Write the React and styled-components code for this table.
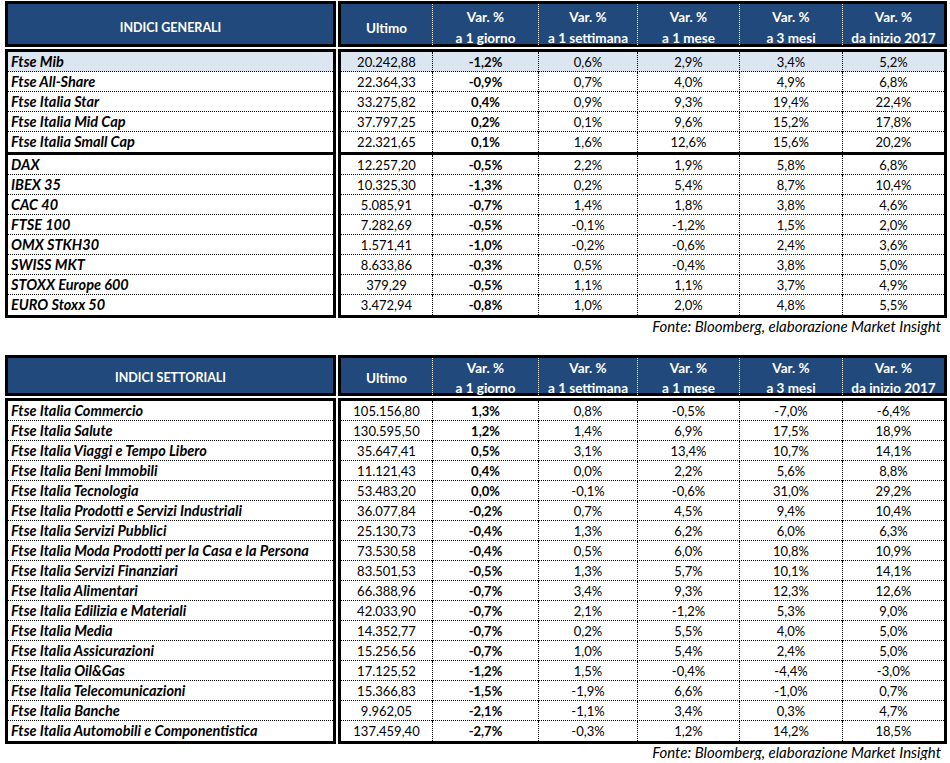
import React from "react";
import styled, { createGlobalStyle } from "styled-components";

const GlobalStyle = createGlobalStyle`
  * { box-sizing: border-box; }
  body {
    margin: 0;
    background: #ffffff;
    font-family: Lato, "Liberation Sans", sans-serif;
    color: #000000;
  }
`;

const COLS = "91px 106px 99px 102px 103px 102px";
const BLUE = "#22497c";

const HEADS = [
  ["Ultimo"],
  ["Var. %", "a 1 giorno"],
  ["Var. %", "a 1 settimana"],
  ["Var. %", "a 1 mese"],
  ["Var. %", "a 3 mesi"],
  ["Var. %", "da inizio 2017"],
];

const generali = [
  [
    ["Ftse Mib", "20.242,88", "-1,2%", "0,6%", "2,9%", "3,4%", "5,2%", true],
    ["Ftse All-Share", "22.364,33", "-0,9%", "0,7%", "4,0%", "4,9%", "6,8%"],
    ["Ftse Italia Star", "33.275,82", "0,4%", "0,9%", "9,3%", "19,4%", "22,4%"],
    ["Ftse Italia Mid Cap", "37.797,25", "0,2%", "0,1%", "9,6%", "15,2%", "17,8%"],
    ["Ftse Italia Small Cap", "22.321,65", "0,1%", "1,6%", "12,6%", "15,6%", "20,2%"],
  ],
  [
    ["DAX", "12.257,20", "-0,5%", "2,2%", "1,9%", "5,8%", "6,8%"],
    ["IBEX 35", "10.325,30", "-1,3%", "0,2%", "5,4%", "8,7%", "10,4%"],
    ["CAC 40", "5.085,91", "-0,7%", "1,4%", "1,8%", "3,8%", "4,6%"],
    ["FTSE 100", "7.282,69", "-0,5%", "-0,1%", "-1,2%", "1,5%", "2,0%"],
    ["OMX STKH30", "1.571,41", "-1,0%", "-0,2%", "-0,6%", "2,4%", "3,6%"],
    ["SWISS MKT", "8.633,86", "-0,3%", "0,5%", "-0,4%", "3,8%", "5,0%"],
    ["STOXX Europe 600", "379,29", "-0,5%", "1,1%", "1,1%", "3,7%", "4,9%"],
    ["EURO Stoxx 50", "3.472,94", "-0,8%", "1,0%", "2,0%", "4,8%", "5,5%"],
  ],
];

const settoriali = [
  [
    ["Ftse Italia Commercio", "105.156,80", "1,3%", "0,8%", "-0,5%", "-7,0%", "-6,4%"],
    ["Ftse Italia Salute", "130.595,50", "1,2%", "1,4%", "6,9%", "17,5%", "18,9%"],
    ["Ftse Italia Viaggi e Tempo Libero", "35.647,41", "0,5%", "3,1%", "13,4%", "10,7%", "14,1%"],
    ["Ftse Italia Beni Immobili", "11.121,43", "0,4%", "0,0%", "2,2%", "5,6%", "8,8%"],
    ["Ftse Italia Tecnologia", "53.483,20", "0,0%", "-0,1%", "-0,6%", "31,0%", "29,2%"],
    ["Ftse Italia Prodotti e Servizi Industriali", "36.077,84", "-0,2%", "0,7%", "4,5%", "9,4%", "10,4%"],
    ["Ftse Italia Servizi Pubblici", "25.130,73", "-0,4%", "1,3%", "6,2%", "6,0%", "6,3%"],
    ["Ftse Italia Moda Prodotti per la Casa e la Persona", "73.530,58", "-0,4%", "0,5%", "6,0%", "10,8%", "10,9%"],
    ["Ftse Italia Servizi Finanziari", "83.501,53", "-0,5%", "1,3%", "5,7%", "10,1%", "14,1%"],
    ["Ftse Italia Alimentari", "66.388,96", "-0,7%", "3,4%", "9,3%", "12,3%", "12,6%"],
    ["Ftse Italia Edilizia e Materiali", "42.033,90", "-0,7%", "2,1%", "-1,2%", "5,3%", "9,0%"],
    ["Ftse Italia Media", "14.352,77", "-0,7%", "0,2%", "5,5%", "4,0%", "5,0%"],
    ["Ftse Italia Assicurazioni", "15.256,56", "-0,7%", "1,0%", "5,4%", "2,4%", "5,0%"],
    ["Ftse Italia Oil&Gas", "17.125,52", "-1,2%", "1,5%", "-0,4%", "-4,4%", "-3,0%"],
    ["Ftse Italia Telecomunicazioni", "15.366,83", "-1,5%", "-1,9%", "6,6%", "-1,0%", "0,7%"],
    ["Ftse Italia Banche", "9.962,05", "-2,1%", "-1,1%", "3,4%", "0,3%", "4,7%"],
    ["Ftse Italia Automobili e Componentistica", "137.459,40", "-2,7%", "-0,3%", "1,2%", "14,2%", "18,5%"],
  ],
];

const IndexTable = ({ title, groups, head }) => (
  <Table>
    <HeadName $h={head.h} $pad={head.pad}>
      {title}
    </HeadName>
    <HeadData $h={head.h}>
      {HEADS.map((lines, i) => (
        <HeadCell key={i} $first={i === 0} $pad={head.pad} $gap={head.gap}>
          {lines.map((l) => (
            <span key={l}>{l}</span>
          ))}
        </HeadCell>
      ))}
    </HeadData>

    <Box>
      {groups.map((rows, g) => (
        <Group key={g} $split={g > 0}>
          {rows.map((r) => (
            <NameCell key={r[0]} $hl={r[7]}>
              {r[0]}
            </NameCell>
          ))}
        </Group>
      ))}
    </Box>
    <Box>
      {groups.map((rows, g) => (
        <Group key={g} $split={g > 0}>
          {rows.map((r) => (
            <DataRow key={r[0]} $hl={r[7]}>
              {r.slice(1, 7).map((v, i) => (
                <Cell key={i} $first={i === 0} $bold={i === 1}>
                  {v}
                </Cell>
              ))}
            </DataRow>
          ))}
        </Group>
      ))}
    </Box>

    <Source>Fonte: Bloomberg, elaborazione Market Insight</Source>
  </Table>
);

const App = () => (
  <>
    <GlobalStyle />
    <Page>
      <IndexTable
        title="INDICI GENERALI"
        groups={generali}
        head={{ h: 46, pad: 6, gap: 7 }}
      />
      <IndexTable
        title="INDICI SETTORIALI"
        groups={settoriali}
        head={{ h: 41, pad: 3, gap: 6 }}
      />
    </Page>
  </>
);

const Page = styled.div`
  width: 950px;
  padding: 1px 3px 0 5px;
  display: flex;
  flex-direction: column;
  gap: 21px;
`;

const Table = styled.div`
  display: grid;
  grid-template-columns: 331px 609px;
  column-gap: 2px;
  row-gap: 2px;
`;

const HeadName = styled.div`
  height: ${(p) => p.$h}px;
  border: 3px solid #000;
  background: ${BLUE};
  color: #ffffff;
  font-weight: 700;
  font-size: 12.5px;
  padding-top: ${(p) => p.$pad}px;
  display: flex;
  align-items: center;
  justify-content: center;
`;

const HeadData = styled.div`
  height: ${(p) => p.$h}px;
  border: 3px solid #000;
  background: ${BLUE};
  display: grid;
  grid-template-columns: ${COLS};
`;

const HeadCell = styled.div`
  border-left: ${(p) => (p.$first ? "none" : "1px dotted #ffffff")};
  color: #ffffff;
  font-weight: 700;
  font-size: 13.5px;
  padding-top: ${(p) => p.$pad}px;
  display: flex;
  flex-direction: column;
  align-items: center;
  justify-content: center;
  gap: ${(p) => p.$gap}px;
  line-height: 14px;
  white-space: nowrap;
`;

const Box = styled.div`
  border: 3px solid #000;
  display: flex;
  flex-direction: column;
`;

const Group = styled.div`
  border-top: ${(p) => (p.$split ? "3px solid #000" : "none")};
  display: flex;
  flex-direction: column;
`;

const NameCell = styled.div`
  height: 20px;
  padding-left: 3px;
  line-height: 20px;
  font-size: 14.5px;
  font-weight: 700;
  font-style: italic;
  white-space: nowrap;
  background: ${(p) => (p.$hl ? "#dce6f1" : "#ffffff")};
  border-bottom: 1px dotted #000;
  &:last-child {
    border-bottom: none;
  }
`;

const DataRow = styled.div`
  height: 20px;
  display: grid;
  grid-template-columns: ${COLS};
  background: ${(p) => (p.$hl ? "#dce6f1" : "#ffffff")};
  border-bottom: 1px dotted #000;
  &:last-child {
    border-bottom: none;
  }
`;

const Cell = styled.div`
  border-left: ${(p) => (p.$first ? "none" : "1px dotted #000")};
  text-align: center;
  line-height: 20px;
  font-size: 13px;
  font-weight: ${(p) => (p.$bold ? 700 : 400)};
`;

const Source = styled.div`
  grid-column: 1 / -1;
  margin-top: -2px;
  text-align: right;
  padding-right: 6px;
  font-style: italic;
  font-size: 15px;
  line-height: 16px;
`;

export default App;
